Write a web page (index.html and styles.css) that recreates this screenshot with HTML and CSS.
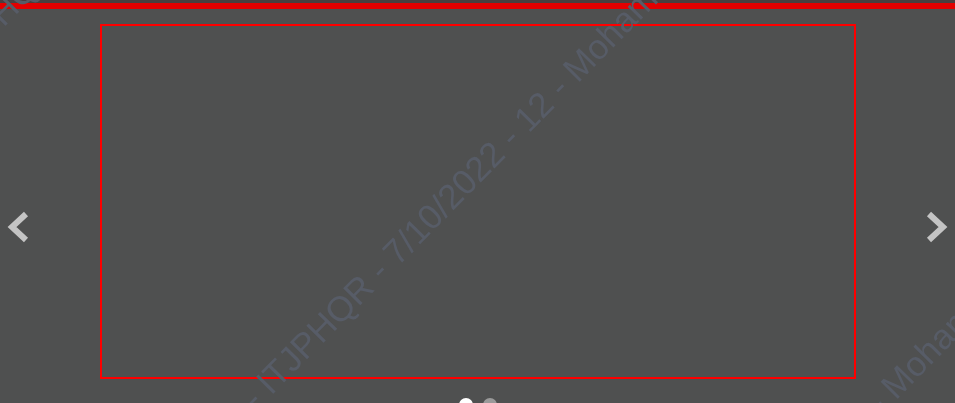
FILE: index.html
```html
<!DOCTYPE html>
<html lang="en">
<head>
<meta charset="utf-8">
<title>Carousel</title>
<link rel="stylesheet" href="styles.css">
</head>
<body>
<div class="topbar"></div>
<main class="carousel">
  <div class="slide"></div>
  <div class="dots">
    <span class="dot active"></span>
    <span class="dot"></span>
  </div>
  <button class="arrow prev" aria-label="Previous">
    <svg width="26" height="34" viewBox="0 0 26 34"><polyline points="21,4 7,17 21,30" fill="none" stroke="#c4c4c4" stroke-width="6" stroke-linejoin="miter"/></svg>
  </button>
  <button class="arrow next" aria-label="Next">
    <svg width="26" height="34" viewBox="0 0 26 34"><polyline points="5,4 19,17 5,30" fill="none" stroke="#c4c4c4" stroke-width="6" stroke-linejoin="miter"/></svg>
  </button>
</main>
<div class="watermark" aria-hidden="true">
  <div class="wm-line wm-1"><span class="wm-pre">12&nbsp;-&nbsp;</span>ITJPHQR - 7/10/2022 - 12 - Mohamed</div>
  <div class="wm-line wm-2"><span class="wm-pre">12&nbsp;-&nbsp;</span>ITJPHQR - 7/10/2022 - 12 - Mohamed</div>
  <div class="wm-line wm-3"><span class="wm-pre">12&nbsp;-&nbsp;</span>ITJPHQR - 7/10/2022 - 12 - Mohamed</div>
</div>
</body>
</html>
```

FILE: styles.css
```css
html, body {
  margin: 0;
  padding: 0;
  height: 100%;
  overflow: hidden;
}
body {
  background: #4f5050;
  font-family: "Liberation Sans", Arial, sans-serif;
}
.topbar {
  height: 3px;
  background: #4a3f3f;
  border-bottom: 6px solid #e40000;
}
.carousel {
  position: relative;
  padding-top: 15px;
}
.slide {
  width: 756px;
  height: 355px;
  box-sizing: border-box;
  border: 2px solid #ff0000;
  margin: 0 auto;
}
.dots {
  display: flex;
  justify-content: center;
  gap: 10px;
  margin-top: 19px;
}
.dot {
  width: 14px;
  height: 14px;
  border-radius: 50%;
  background: #9a9a9a;
}
.dot.active {
  background: #ffffff;
}
.arrow {
  position: absolute;
  top: 201px;
  padding: 0;
  border: 0;
  background: none;
  width: 26px;
  height: 34px;
}
.arrow svg { display: block; }
.arrow.prev { left: 5px; }
.arrow.next { right: 5px; }
.watermark {
  position: fixed;
  inset: 0;
  overflow: hidden;
  pointer-events: none;
}
.wm-line {
  position: absolute;
  font-size: 35px;
  line-height: 35px;
  white-space: nowrap;
  color: #575c67;
  transform: rotate(-45.5deg);
  transform-origin: 0 30px;
}
.wm-pre {
  position: absolute;
  right: 100%;
}
.wm-1 { left: -47px; top: 49px; }
.wm-2 { left: 271px; top: 366px; }
.wm-3 { left: 589px; top: 683px; }
```
